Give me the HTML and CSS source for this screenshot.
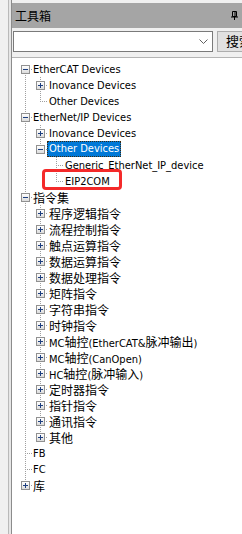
FILE: index.html
```html
<!DOCTYPE html>
<html lang="zh">
<head>
<meta charset="utf-8">
<title>工具箱</title>
<link rel="stylesheet" href="styles.css">
</head>
<body>
<div class="app">
  <div class="side"></div>
  <div class="gutter"></div>
  <div class="panel">
    <div class="title">
      <span class="title-text">工具箱</span>
      <svg class="pin" width="7" height="9" viewBox="0 0 7 9"><path d="M1.5 0.5h4v5h-4z" fill="none" stroke="#000"/><path d="M4 1v4" stroke="#000"/><path d="M0 6h7" stroke="#000"/><path d="M3.5 6v3" stroke="#000"/></svg>
    </div>
    <div class="search">
      <div class="combo">
        <svg class="chev" width="9" height="5" viewBox="0 0 9 5"><path d="M0.5 0.5l4 4 4-4" fill="none" stroke="#606060"/></svg>
      </div>
      <div class="btn-search">搜索</div>
    </div>
    <div class="tree">
      <div class="row"><i class="c first"><b class="box minus"></b></i><span class="lbl">EtherCAT Devices</span></div>
      <div class="row"><i class="c v"></i><i class="c tee"><b class="box plus"></b></i><span class="lbl">Inovance Devices</span></div>
      <div class="row"><i class="c v"></i><i class="c end"></i><span class="lbl">Other Devices</span></div>
      <div class="row"><i class="c tee"><b class="box minus"></b></i><span class="lbl">EtherNet/IP Devices</span></div>
      <div class="row"><i class="c v"></i><i class="c tee"><b class="box plus"></b></i><span class="lbl">Inovance Devices</span></div>
      <div class="row"><i class="c v"></i><i class="c end"><b class="box minus"></b></i><span class="lbl sel">Other Devices</span></div>
      <div class="row"><i class="c v"></i><i class="c"></i><i class="c tee"></i><span class="lbl">Generic_EtherNet_IP_device</span></div>
      <div class="row"><i class="c v"></i><i class="c"></i><i class="c end"></i><span class="lbl">EIP2COM</span><span class="mark"></span></div>
      <div class="row"><i class="c tee"><b class="box minus"></b></i><span class="lbl zh">指令集</span></div>
      <div class="row"><i class="c v"></i><i class="c tee"><b class="box plus"></b></i><span class="lbl zh">程序逻辑指令</span></div>
      <div class="row"><i class="c v"></i><i class="c tee"><b class="box plus"></b></i><span class="lbl zh">流程控制指令</span></div>
      <div class="row"><i class="c v"></i><i class="c tee"><b class="box plus"></b></i><span class="lbl zh">触点运算指令</span></div>
      <div class="row"><i class="c v"></i><i class="c tee"><b class="box plus"></b></i><span class="lbl zh">数据运算指令</span></div>
      <div class="row"><i class="c v"></i><i class="c tee"><b class="box plus"></b></i><span class="lbl zh">数据处理指令</span></div>
      <div class="row"><i class="c v"></i><i class="c tee"><b class="box plus"></b></i><span class="lbl zh">矩阵指令</span></div>
      <div class="row"><i class="c v"></i><i class="c tee"><b class="box plus"></b></i><span class="lbl zh">字符串指令</span></div>
      <div class="row"><i class="c v"></i><i class="c tee"><b class="box plus"></b></i><span class="lbl zh">时钟指令</span></div>
      <div class="row"><i class="c v"></i><i class="c tee"><b class="box plus"></b></i><span class="lbl">MC<span class="z">轴控</span>(EtherCAT&amp;<span class="z">脉冲输出</span>)</span></div>
      <div class="row"><i class="c v"></i><i class="c tee"><b class="box plus"></b></i><span class="lbl">MC<span class="z">轴控</span>(CanOpen)</span></div>
      <div class="row"><i class="c v"></i><i class="c tee"><b class="box plus"></b></i><span class="lbl">HC<span class="z">轴控</span>(<span class="z">脉冲输入</span>)</span></div>
      <div class="row"><i class="c v"></i><i class="c tee"><b class="box plus"></b></i><span class="lbl zh">定时器指令</span></div>
      <div class="row"><i class="c v"></i><i class="c tee"><b class="box plus"></b></i><span class="lbl zh">指针指令</span></div>
      <div class="row"><i class="c v"></i><i class="c tee"><b class="box plus"></b></i><span class="lbl zh">通讯指令</span></div>
      <div class="row"><i class="c v"></i><i class="c end"><b class="box plus"></b></i><span class="lbl zh">其他</span></div>
      <div class="row"><i class="c tee"></i><span class="lbl">FB</span></div>
      <div class="row"><i class="c tee"></i><span class="lbl">FC</span></div>
      <div class="row"><i class="c end"><b class="box plus"></b></i><span class="lbl zh">库</span></div>
    </div>
  </div>
</div>
</body>
</html>
```
FILE: styles.css
```css
html, body {
  margin: 0;
  padding: 0;
}
body {
  width: 242px;
  height: 534px;
  overflow: hidden;
  background: #f0f0f0;
  font-family: "DejaVu Sans Condensed", "DejaVu Sans", "Noto Sans CJK SC", sans-serif;
  font-stretch: condensed;
  font-size: 11px;
  color: #000;
}
.app {
  display: flex;
  height: 534px;
}
.side {
  width: 8px;
  flex: none;
  background: #f0f0f0;
  border-right: 1px solid #b9b9b9;
}
.gutter {
  width: 2px;
  flex: none;
  background: #e6e6e6;
}
.panel {
  flex: 1;
  min-width: 0;
  border-left: 1px solid #8c8c8c;
  padding-top: 3px;
  display: flex;
  flex-direction: column;
}
.title {
  height: 25px;
  flex: none;
  background: #a5a5a5;
  display: flex;
  align-items: center;
  justify-content: space-between;
  padding: 0 4px 0 3px;
}
.title-text {
  font-family: "Noto Sans CJK SC", sans-serif;
  font-size: 12px;
  line-height: 14px;
}
.pin {
  display: block;
  margin-top: -1px;
}
.search {
  flex: none;
  display: flex;
  gap: 4px;
  padding: 3px 0 5px 1px;
}
.combo {
  width: 200px;
  height: 21px;
  box-sizing: border-box;
  flex: none;
  background: #fff;
  border: 1px solid #7a7a7a;
  display: flex;
  align-items: center;
  justify-content: flex-end;
  padding-right: 4px;
}
.chev {
  display: block;
}
.btn-search {
  height: 21px;
  box-sizing: border-box;
  flex: none;
  width: 44px;
  background: #e1e1e1;
  border: 1px solid #adadad;
  padding-left: 8px;
  font-family: "Noto Sans CJK SC", sans-serif;
  font-size: 13px;
  line-height: 18px;
  white-space: nowrap;
  overflow: hidden;
}
.tree {
  flex: 1;
  background: #fff;
  border-top: 1px solid #b4b4b4;
  padding: 3px 0 0 5px;
  overflow: hidden;
}
.row {
  position: relative;
  display: flex;
  height: 16px;
  white-space: nowrap;
}
.c {
  position: relative;
  flex: none;
  width: 16px;
  height: 16px;
}
.c:first-child {
  width: 15px;
}
.v::before,
.tee::before,
.end::before,
.first::before {
  content: "";
  position: absolute;
  left: 8px;
  top: 0;
  width: 1px;
  height: 16px;
  background: repeating-linear-gradient(to bottom, #a0a0a0 0 1px, transparent 1px 2px);
}
.end::before {
  height: 9px;
}
.first::before {
  top: 8px;
  height: 8px;
}
.tee::after,
.end::after,
.first::after {
  content: "";
  position: absolute;
  left: 9px;
  right: 0;
  top: 8px;
  height: 1px;
  background: repeating-linear-gradient(to right, transparent 0 1px, #a0a0a0 1px 2px);
}
.box {
  position: absolute;
  left: 4px;
  top: 4px;
  width: 9px;
  height: 9px;
  box-sizing: border-box;
  border: 1px solid #919191;
  background: linear-gradient(#ffffff, #dcdcdc);
  z-index: 1;
}
.box::before {
  content: "";
  position: absolute;
  left: 1px;
  top: 3px;
  width: 5px;
  height: 1px;
  background: #1e3f7f;
}
.plus::after {
  content: "";
  position: absolute;
  left: 3px;
  top: 1px;
  width: 1px;
  height: 5px;
  background: #1e3f7f;
}
.lbl {
  margin-left: -1px;
  padding: 1px 2px 0;
  line-height: 15px;
  height: 16px;
  box-sizing: border-box;
}
.zh,
.z {
  font-family: "Noto Sans CJK SC", sans-serif;
  font-size: 12px;
}
.sel {
  background: #0078d7;
  color: #fff;
  border: 1px dotted #3a2a10;
  padding: 0 1px;
  line-height: 14px;
}
.mark {
  position: absolute;
  left: 25px;
  top: -4px;
  width: 80px;
  height: 21px;
  box-sizing: border-box;
  border: 3px solid #f42a2a;
  border-radius: 4px;
}
```
